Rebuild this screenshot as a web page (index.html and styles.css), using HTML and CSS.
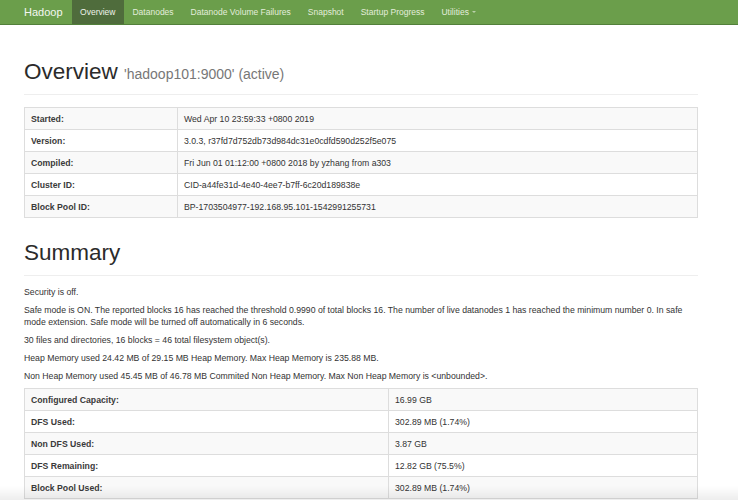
FILE: index.html
```html
<!DOCTYPE html>
<html>
<head>
<meta charset="utf-8">
<title>Namenode information</title>
<link rel="stylesheet" href="styles.css">
</head>
<body>
<header class="navbar">
  <span class="brand">Hadoop</span>
  <nav class="nav">
    <a class="nav-link active">Overview</a>
    <a class="nav-link">Datanodes</a>
    <a class="nav-link">Datanode Volume Failures</a>
    <a class="nav-link">Snapshot</a>
    <a class="nav-link">Startup Progress</a>
    <a class="nav-link">Utilities <span class="caret"></span></a>
  </nav>
</header>
<main class="container">
  <div class="page-header first">
    <h1>Overview <small>'hadoop101:9000' (active)</small></h1>
  </div>
  <table class="table info">
    <tr><th>Started:</th><td>Wed Apr 10 23:59:33 +0800 2019</td></tr>
    <tr><th>Version:</th><td>3.0.3, r37fd7d752db73d984dc31e0cdfd590d252f5e075</td></tr>
    <tr><th>Compiled:</th><td>Fri Jun 01 01:12:00 +0800 2018 by yzhang from a303</td></tr>
    <tr><th>Cluster ID:</th><td>CID-a44fe31d-4e40-4ee7-b7ff-6c20d189838e</td></tr>
    <tr><th>Block Pool ID:</th><td>BP-1703504977-192.168.95.101-1542991255731</td></tr>
  </table>
  <div class="page-header second">
    <h1>Summary</h1>
  </div>
  <p class="first-p">Security is off.</p>
  <p>Safe mode is ON. The reported blocks 16 has reached the threshold 0.9990 of total blocks 16. The number of live datanodes 1 has reached the minimum number 0. In safe mode extension. Safe mode will be turned off automatically in 6 seconds.</p>
  <p>30 files and directories, 16 blocks = 46 total filesystem object(s).</p>
  <p>Heap Memory used 24.42 MB of 29.15 MB Heap Memory. Max Heap Memory is 235.88 MB.</p>
  <p>Non Heap Memory used 45.45 MB of 46.78 MB Commited Non Heap Memory. Max Non Heap Memory is &lt;unbounded&gt;.</p>
  <table class="table summary">
    <tr><th>Configured Capacity:</th><td>16.99 GB</td></tr>
    <tr><th>DFS Used:</th><td>302.89 MB (1.74%)</td></tr>
    <tr><th>Non DFS Used:</th><td>3.87 GB</td></tr>
    <tr><th>DFS Remaining:</th><td>12.82 GB (75.5%)</td></tr>
    <tr><th>Block Pool Used:</th><td>302.89 MB (1.74%)</td></tr>
  </table>
</main>
<div class="shade"></div>
</body>
</html>
```

FILE: styles.css
```css
html, body {
  margin: 0;
  padding: 0;
  background: #fff;
}
body {
  font-family: "Liberation Sans", Arial, Helvetica, sans-serif;
  font-size: 8.7px;
  line-height: 12px;
  color: #333;
}
.navbar {
  display: flex;
  align-items: stretch;
  height: 24px;
  background: #6b9e4b;
  border-bottom: 1px solid #52803a;
  padding-left: 24px;
}
.brand {
  display: flex;
  align-items: center;
  font-size: 11px;
  color: #f4f7f1;
  padding-right: 9px;
}
.nav {
  display: flex;
}
.nav-link {
  display: flex;
  align-items: center;
  padding: 0 8.5px;
  font-size: 8.5px;
  color: #e3eddc;
}
.nav-link.active {
  background: #4f6c3c;
  color: #eef2ea;
}
.caret {
  display: inline-block;
  width: 0;
  height: 0;
  margin-left: 3px;
  border-left: 2px solid transparent;
  border-right: 2px solid transparent;
  border-top: 2px solid #b9d0aa;
  vertical-align: middle;
}
.container {
  padding: 0 40px 0 24px;
}
.page-header {
  padding-bottom: 9px;
  border-bottom: 1px solid #eee;
}
.page-header.first {
  margin: 34px 0 12px;
}
.page-header.second {
  margin: 22px 0 10px;
}
h1 {
  margin: 0;
  font-size: 22.5px;
  line-height: 26px;
  font-weight: normal;
  color: #2b2b2b;
}
h1 small {
  font-size: 14px;
  line-height: 1;
  color: #777;
  font-weight: normal;
}
p {
  margin: 0 0 6px;
}
.table {
  width: 100%;
  border-collapse: collapse;
  border: 1px solid #ddd;
}
.table th,
.table td {
  height: 21px;
  padding: 0 6px;
  text-align: left;
  border-top: 1px solid #ddd;
  vertical-align: middle;
}
.table th {
  font-weight: bold;
  color: #3a3a3a;
  border-right: 1px solid #ddd;
}
.table tr:nth-child(odd) {
  background: #f9f9f9;
}
.info th {
  width: 140px;
}
.summary th {
  width: 351px;
}
.shade {
  position: fixed;
  left: 0;
  right: 0;
  bottom: 0;
  height: 14px;
  background: linear-gradient(to bottom, rgba(0,0,0,0), rgba(0,0,0,0.07));
  pointer-events: none;
}
```
